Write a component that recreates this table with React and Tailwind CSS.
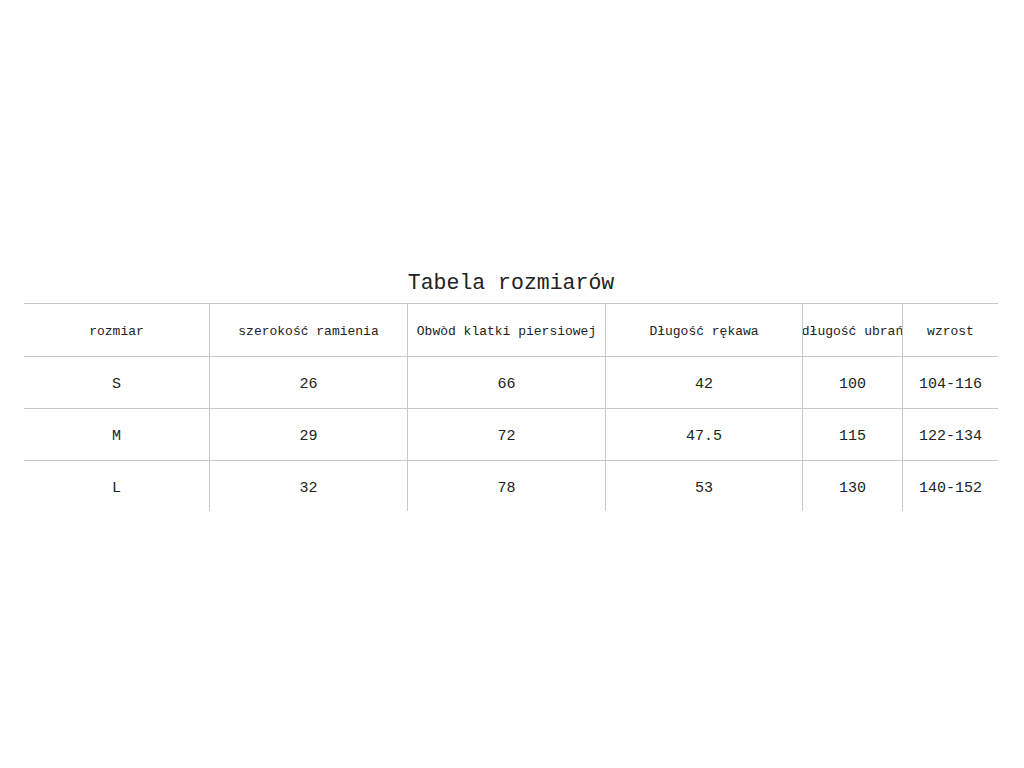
export default function App() {
  const cols = "grid w-[974px] grid-cols-[185px_198px_198px_197px_100px_96px]";
  const headers = [
    "rozmiar",
    "szerokość ramienia",
    "Obwòd klatki piersiowej",
    "Długość rękawa",
    "długość ubrań",
    "wzrost",
  ];
  const rows = [
    ["S", "26", "66", "42", "100", "104-116"],
    ["M", "29", "72", "47.5", "115", "122-134"],
    ["L", "32", "78", "53", "130", "140-152"],
  ];
  const font = { fontFamily: '"Liberation Mono", "DejaVu Sans Mono", monospace' };
  return (
    <div className="w-[1024px] h-[768px] bg-white text-[#222]" style={font}>
      <div className="pt-[258px] pl-[24px]">
        <div className="w-[974px] h-[45px] flex items-center justify-center pt-[5px] text-[21.5px]">
          Tabela rozmiarów
        </div>
        <div className={`${cols} h-[53px] border-t border-[#c8c8c8] text-[13px]`}>
          {headers.map((h, i) => (
            <div
              key={i}
              className={`flex items-center justify-center pt-[4px] whitespace-nowrap overflow-hidden ${i > 0 ? "border-l border-[#c8c8c8]" : ""}`}
            >
              {h}
            </div>
          ))}
        </div>
        {rows.map((r, ri) => (
          <div
            key={ri}
            className={`${cols} ${ri === 2 ? "h-[51px]" : "h-[52px]"} border-t border-[#c8c8c8] text-[15px]`}
          >
            {r.map((c, i) => (
              <div
                key={i}
                className={`flex items-center justify-center pt-[6px] whitespace-nowrap ${i > 0 ? "border-l border-[#c8c8c8]" : ""}`}
              >
                {c}
              </div>
            ))}
          </div>
        ))}
      </div>
    </div>
  );
}
